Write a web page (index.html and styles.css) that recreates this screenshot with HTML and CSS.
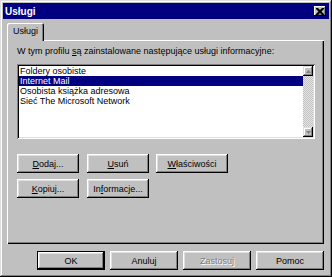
FILE: index.html
```html
<!DOCTYPE html>
<html lang="pl">
<head>
    <meta charset="UTF-8">
    <title>Usługi</title>
    <link rel="stylesheet" href="styles.css">
</head>
<body>
    <div class="window">
        <div class="titlebar">
            <span class="title">Usługi</span>
            <span class="close-btn">
                <svg width="8" height="7" viewBox="0 0 8 7">
                    <path d="M0 0h2l2 2 2-2h2v1l-2.5 2.5L8 6v1H6L4 5 2 7H0V6l2.5-2.5L0 1z" fill="#000"/>
                </svg>
            </span>
        </div>

        <div class="dialog-body">
            <div class="tabs">
                <div class="tab">Usługi</div>
            </div>

            <div class="panel">
                <p class="panel-label">W tym profilu <u>s</u>ą zainstalowane następujące usługi informacyjne:</p>

                <div class="listbox">
                    <ul class="list-items">
                        <li>Foldery osobiste</li>
                        <li class="selected">Internet Mail</li>
                        <li>Osobista książka adresowa</li>
                        <li>Sieć The Microsoft Network</li>
                    </ul>
                    <div class="scrollbar">
                        <span class="scroll-btn">
                            <svg width="5" height="3" viewBox="0 0 5 3"><path d="M2.5 0L5 3H0z" fill="#808080"/></svg>
                        </span>
                        <span class="scroll-track"></span>
                        <span class="scroll-btn">
                            <svg width="5" height="3" viewBox="0 0 5 3"><path d="M0 0h5L2.5 3z" fill="#808080"/></svg>
                        </span>
                    </div>
                </div>

                <div class="button-grid">
                    <button class="btn"><u>D</u>odaj...</button>
                    <button class="btn"><u>U</u>suń</button>
                    <button class="btn btn-wide"><u>W</u>łaściwości</button>
                    <button class="btn"><u>K</u>opiuj...</button>
                    <button class="btn">In<u>f</u>ormacje...</button>
                </div>
            </div>

            <div class="footer">
                <button class="btn btn-footer btn-default">OK</button>
                <button class="btn btn-footer">Anuluj</button>
                <button class="btn btn-footer btn-disabled">Zastosuj</button>
                <button class="btn btn-footer">Pomoc</button>
            </div>
        </div>
    </div>
</body>
</html>
```

FILE: styles.css
```css
:root {
    --color-face: #c0c0c0;
    --color-light: #dfdfdf;
    --color-white: #ffffff;
    --color-shadow: #808080;
    --color-dark: #000000;
    --color-title: #000080;
}

* {
    margin: 0;
    padding: 0;
    box-sizing: border-box;
    font-family: 'Liberation Sans', Arial, sans-serif;
}

body {
    background-color: var(--color-face);
}

.window {
    width: 332px;
    height: 277px;
    padding: 2px;
    background-color: var(--color-face);
    box-shadow:
        inset -1px -1px var(--color-dark),
        inset 1px 1px var(--color-light),
        inset -2px -2px var(--color-shadow),
        inset 2px 2px var(--color-white);
    display: flex;
    flex-direction: column;
}

.titlebar {
    height: 16px;
    margin: 1px 1px 0 1px;
    padding: 0 3px 0 2px;
    background-color: var(--color-title);
    color: var(--color-white);
    display: flex;
    align-items: center;
    justify-content: space-between;
}

.title {
    font-size: 10px;
    font-weight: 700;
}

.close-btn {
    width: 12px;
    height: 10px;
    background-color: var(--color-face);
    box-shadow:
        inset -1px -1px var(--color-dark),
        inset 1px 1px var(--color-white),
        inset -2px -2px var(--color-shadow);
    display: flex;
    align-items: center;
    justify-content: center;
}

.dialog-body {
    padding: 4px 6px 0 5px;
    display: flex;
    flex-direction: column;
}

.tabs {
    display: flex;
    margin-bottom: -1px;
    position: relative;
    z-index: 1;
}

.tab {
    width: 37px;
    height: 18px;
    padding: 3px 0 0 6px;
    font-size: 9px;
    color: var(--color-dark);
    background-color: var(--color-face);
    border-radius: 2px 2px 0 0;
    box-shadow:
        inset 1px 1px var(--color-white),
        inset -1px 0 var(--color-dark),
        inset -2px 0 var(--color-shadow);
}

.panel {
    height: 204px;
    padding: 6px 8px 0 10px;
    box-shadow:
        inset 1px 1px var(--color-white),
        inset -1px -1px var(--color-dark),
        inset -2px -2px var(--color-shadow);
}

.panel-label {
    font-size: 9px;
    line-height: 11px;
    color: var(--color-dark);
}

.listbox {
    width: 298px;
    height: 75px;
    margin-top: 7px;
    padding: 2px;
    background-color: var(--color-white);
    box-shadow:
        inset 1px 1px var(--color-shadow),
        inset -1px -1px var(--color-white),
        inset 2px 2px var(--color-dark),
        inset -2px -2px var(--color-light);
    display: flex;
}

.list-items {
    flex: 1;
    list-style: none;
    padding-top: 0;
}

.list-items li {
    height: 10px;
    line-height: 10px;
    padding-left: 1px;
    font-size: 9px;
    color: var(--color-dark);
    white-space: nowrap;
}

.list-items li.selected {
    background-color: var(--color-title);
    color: var(--color-white);
}

.scrollbar {
    width: 10px;
    display: flex;
    flex-direction: column;
    background-color: #e6e6e6;
    background-image:
        linear-gradient(45deg, var(--color-face) 25%, transparent 25%, transparent 75%, var(--color-face) 75%),
        linear-gradient(45deg, var(--color-face) 25%, transparent 25%, transparent 75%, var(--color-face) 75%);
    background-size: 2px 2px;
    background-position: 0 0, 1px 1px;
}

.scroll-btn {
    height: 10px;
    background-color: var(--color-face);
    box-shadow:
        inset -1px -1px var(--color-dark),
        inset 1px 1px var(--color-light),
        inset -2px -2px var(--color-shadow),
        inset 2px 2px var(--color-white);
    display: flex;
    align-items: center;
    justify-content: center;
}

.scroll-track {
    flex: 1;
}

.button-grid {
    margin-top: 15px;
    display: grid;
    grid-template-columns: 62px 62px 71px;
    column-gap: 8px;
    row-gap: 6px;
}

.button-grid .btn:nth-child(3) {
    margin-left: -1px;
}

.btn {
    height: 19px;
    font-size: 9px;
    color: var(--color-dark);
    background-color: var(--color-face);
    border: none;
    box-shadow:
        inset -1px -1px var(--color-dark),
        inset 1px 1px var(--color-white),
        inset -2px -2px var(--color-shadow),
        inset 2px 2px var(--color-light);
}

.footer {
    margin-top: 7px;
    display: flex;
    justify-content: flex-end;
    gap: 5px;
}

.btn-footer {
    width: 68px;
}

.btn-default {
    box-shadow:
        inset 0 0 0 1px var(--color-dark),
        inset -2px -2px var(--color-dark),
        inset 2px 2px var(--color-white),
        inset -3px -3px var(--color-shadow),
        inset 3px 3px var(--color-light);
}

.btn-disabled {
    color: var(--color-shadow);
    text-shadow: 1px 1px var(--color-white);
}
```
